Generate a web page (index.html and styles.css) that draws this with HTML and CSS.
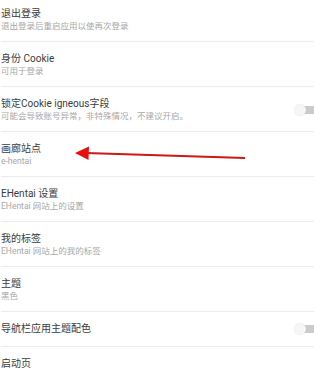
FILE: index.html
```html
<!DOCTYPE html>
<html>
  <head>
    <meta charset="utf-8">
    <title>设置</title>
    <link rel="stylesheet" href="styles.css">
  </head>
  <body>
    <div class="list">
      <div class="item first">
        <div class="text">
          <p class="title">退出登录</p>
          <p class="sub">退出登录后重启应用以使再次登录</p>
        </div>
      </div>
      <div class="item">
        <div class="text">
          <p class="title">身份 Cookie</p>
          <p class="sub">可用于登录</p>
        </div>
      </div>
      <div class="item">
        <div class="text">
          <p class="title">锁定Cookie igneous字段</p>
          <p class="sub">可能会导致账号异常，非特殊情况，不建议开启。</p>
        </div>
        <span class="switch"><span class="knob"></span></span>
      </div>
      <div class="item">
        <div class="text">
          <p class="title">画廊站点</p>
          <p class="sub">e-hentai</p>
        </div>
      </div>
      <div class="item">
        <div class="text">
          <p class="title">EHentai 设置</p>
          <p class="sub">EHentai 网站上的设置</p>
        </div>
      </div>
      <div class="item">
        <div class="text">
          <p class="title">我的标签</p>
          <p class="sub">EHentai 网站上的我的标签</p>
        </div>
      </div>
      <div class="item">
        <div class="text">
          <p class="title">主题</p>
          <p class="sub">黑色</p>
        </div>
      </div>
      <div class="item single">
        <div class="text">
          <p class="title">导航栏应用主题配色</p>
        </div>
        <span class="switch"><span class="knob"></span></span>
      </div>
      <div class="item single">
        <div class="text">
          <p class="title">启动页</p>
        </div>
      </div>
    </div>

    <!-- 标注箭头 -->
    <svg class="arrow" width="314" height="372" viewBox="0 0 314 372">
      <line x1="86" y1="153" x2="245" y2="158" stroke="#d01616" stroke-width="2" />
      <polygon points="75,153 89,146.5 88.5,160" fill="#e60f0f" />
    </svg>
  </body>
</html>
```

FILE: styles.css
```css
html, body {
  margin: 0;
  padding: 0;
  overflow: hidden;
  background: #fff;
}

body {
  width: 314px;
  height: 372px;
  position: relative;
  font-family: Roboto, "Noto Sans CJK SC", sans-serif;
}

.list {
  padding-left: 1px;
}

.item {
  display: flex;
  align-items: center;
  justify-content: space-between;
  padding: 10px 0 9px;
  border-bottom: 1px solid #ececec;
}

.item.first {
  padding-top: 7px;
}

.item.single {
  padding-bottom: 11px;
}

.item p {
  margin: 0;
}

.title {
  font-size: 10px;
  line-height: 13px;
  color: #3c3c3c;
}

.sub {
  font-size: 8.5px;
  line-height: 12px;
  color: #a8a8a8;
}

.switch {
  position: relative;
  width: 26px;
  height: 8px;
  margin-right: -7px;
  border-radius: 4px;
  background-color: #cbcbcb;
}

.knob {
  position: absolute;
  left: -1px;
  top: -2px;
  width: 12px;
  height: 12px;
  border-radius: 50%;
  background-color: #f6f6f6;
  box-shadow: 0 0 1px rgba(0,0,0,0.15);
}

.arrow {
  position: absolute;
  left: 0;
  top: 0;
}
```
